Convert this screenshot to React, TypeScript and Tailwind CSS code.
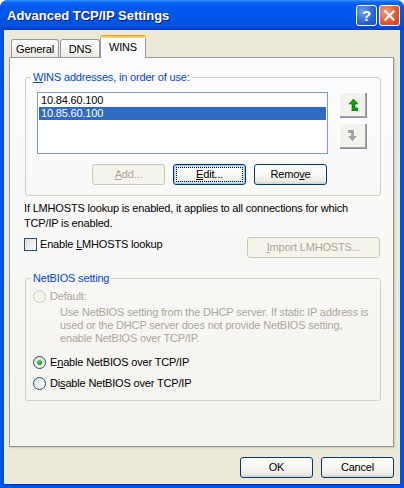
import React from "react";

const font = "font-['Liberation_Sans',Arial,sans-serif] text-[11px] leading-[13px] tracking-[-0.17px]";

function XpButton({
  children,
  disabled,
  focused,
  w = "w-[73px]",
}: {
  children: React.ReactNode;
  disabled?: boolean;
  focused?: boolean;
  w?: string;
}) {
  if (disabled) {
    return (
      <div className={`${w} h-[21px] rounded-[3px] border border-[#C9C7BA] bg-[#F5F4EA] text-[#ACA899] flex items-center justify-center`}>
        {children}
      </div>
    );
  }
  return (
    <div
      className={`${w} h-[21px] rounded-[3px] border border-[#003C74] bg-[linear-gradient(to_bottom,#FFFFFF_0%,#F4F4F0_60%,#ECEBE6_85%,#D6D0C5_100%)] flex items-center justify-center p-[1px] ${
        focused ? "shadow-[inset_0_0_0_1px_#A9C4F1,inset_0_0_0_2px_#CEE7FF]" : ""
      }`}
    >
      <div
        className={`w-full h-full flex items-center justify-center ${
          focused ? "outline-1 outline-dotted outline-black -outline-offset-2" : ""
        }`}
      >
        {children}
      </div>
    </div>
  );
}

function Radio({ checked, disabled }: { checked?: boolean; disabled?: boolean }) {
  return (
    <div
      className={`w-[13px] h-[13px] rounded-full border shrink-0 flex items-center justify-center ${
        disabled
          ? "border-[#CAC8BB] bg-[#F5F4EA]"
          : "border-[#1C5180] bg-[linear-gradient(135deg,#DCDCD7,#FFFFFF)]"
      }`}
    >
      {checked && (
        <div className="w-[5px] h-[5px] rounded-full bg-[radial-gradient(circle_at_35%_35%,#55D551,#21A121_60%,#1A7A1A)]" />
      )}
    </div>
  );
}

function Tab({ label, w }: { label: string; w: string }) {
  return (
    <div
      className={`${w} h-[18px] rounded-t-[3px] border border-b-0 border-[#919B9C] bg-[linear-gradient(to_bottom,#FFFFFF,#ECEBE6)] flex items-center justify-center pt-[1px]`}
    >
      {label}
    </div>
  );
}

function UpArrow() {
  return (
    <svg width="9" height="12" viewBox="0 0 9 12">
      <path d="M4.5 0 L9 5 L6 5 L6 9 L9 9 L9 12 L3 12 L3 5 L0 5 Z" fill="#00A800" stroke="#006A00" strokeWidth="0.6" />
    </svg>
  );
}

function DownArrow() {
  return (
    <svg width="10" height="13" viewBox="0 0 10 13">
      <path d="M1 1 L7 1 L7 7 L10 7 L5.5 12.5 L1 7 L4 7 L4 4 L1 4 Z" fill="#FFFFFF" />
      <path d="M0 0 L6 0 L6 6 L9 6 L4.5 11.5 L0 6 L3 6 L3 3 L0 3 Z" fill="#A5A5A5" />
    </svg>
  );
}

export default function App() {
  return (
    <div className={`w-[404px] h-[488px] flex flex-col bg-[#0053E8] rounded-t-[8px] overflow-hidden ${font}`}>
      {/* title bar */}
      <div className="h-[30px] shrink-0 flex items-center pl-[7px] pr-[4px] bg-[linear-gradient(to_bottom,#3D95FF_0%,#0A66F5_8%,#0058EE_25%,#0055EA_60%,#0050E0_85%,#003DC8_100%)]">
        <span className="flex-1 text-white font-bold text-[13px] tracking-normal font-['Liberation_Sans_Narrow','Liberation_Sans',sans-serif] [text-shadow:1px_1px_0_#0A1883] pt-[1px]">
          Advanced TCP/IP Settings
        </span>
        <div className="flex gap-[2px]">
          <div className="w-[21px] h-[21px] rounded-[3px] border border-white bg-[radial-gradient(circle_at_30%_30%,#6D9CF6,#2663DE_60%,#1B4FC8)] flex items-center justify-center text-white font-bold text-[15px]">
            ?
          </div>
          <div className="w-[21px] h-[21px] rounded-[3px] border border-white bg-[radial-gradient(circle_at_30%_30%,#F29B7A,#E0582A_60%,#C8401A)] flex items-center justify-center">
            <svg width="11" height="11" viewBox="0 0 11 11">
              <path d="M1.5 1.5 L9.5 9.5 M9.5 1.5 L1.5 9.5" stroke="#FFFFFF" strokeWidth="2.2" strokeLinecap="square" />
            </svg>
          </div>
        </div>
      </div>

      {/* client */}
      <div className="flex-1 mx-[4px] mb-[4px] bg-[#ECE9D8] flex flex-col pt-[5px] shadow-[0_1px_0_#0030C0]">
        {/* tabs */}
        <div className="flex items-end pl-[7px] h-[22px]">
          <Tab label="General" w="w-[48px]" />
          <div className="w-[1px]" />
          <Tab label="DNS" w="w-[40px]" />
          <div className="w-[46px] h-[23px] -mb-px relative z-10 rounded-t-[3px] border-x border-[#919B9C] bg-[#FCFCFE] flex flex-col">
            <div className="h-[3px] rounded-t-[3px] -mx-px bg-[linear-gradient(to_bottom,#E68B2C,#FFC73C,#FFE2A2)]" />
            <div className="flex-1 flex items-center justify-center pb-[2px]">WINS</div>
          </div>
        </div>

        {/* panel */}
        <div className="ml-[5px] w-[385px] h-[390px] border border-[#919B9C] bg-[linear-gradient(to_bottom,#FCFCFE,#F4F3EE)] shadow-[1px_1px_0_#D0CEBF,2px_2px_0_#E3E0D0] pl-[15px] pt-[13px] flex flex-col">
          {/* WINS addresses group */}
          <fieldset className="w-[356px] border border-[#D0D0BF] rounded-[3px] px-[11px] pb-[10px]">
            <legend className="ml-[-6px] px-[2px] text-[#0046D5]">
              <span className="underline">W</span>INS addresses, in order of use:
            </legend>
            <div className="flex mt-[8px]">
              <div className="w-[291px] h-[62px] border border-[#7F9DB9] bg-white p-[1px] flex flex-col">
                <div className="h-[13px] pl-[2px]">10.84.60.100</div>
                <div className="h-[13px] pl-[2px] bg-[#316AC5] text-white">10.85.60.100</div>
              </div>
              <div className="ml-[11px] flex flex-col gap-[6px]">
                <div className="w-[27px] h-[25px] bg-[#F3F2EC] border-t border-l border-[#FFFFFF] shadow-[inset_-1px_-1px_0_#ACA899,1px_1px_0_#8E8AA8] flex items-center justify-center">
                  <UpArrow />
                </div>
                <div className="w-[27px] h-[25px] bg-[#F3F2EC] border-t border-l border-[#FFFFFF] shadow-[inset_-1px_-1px_0_#ACA899,1px_1px_0_#8E8AA8] flex items-center justify-center">
                  <DownArrow />
                </div>
              </div>
            </div>
            <div className="w-[290px] flex justify-end gap-[8px] mt-[10px]">
              <XpButton disabled>
                <span>
                  <span className="underline">A</span>dd...
                </span>
              </XpButton>
              <XpButton focused>
                <span>
                  <span className="underline">E</span>dit...
                </span>
              </XpButton>
              <XpButton>
                <span>
                  Remo<span className="underline">v</span>e
                </span>
              </XpButton>
            </div>
          </fieldset>

          <p className="mt-[5px] -ml-px leading-[15px]">
            If LMHOSTS lookup is enabled, it applies to all connections for which
            <br />
            TCP/IP is enabled.
          </p>

          <div className="w-[356px] mt-[6px] flex items-start justify-between -ml-px">
            <div className="flex items-center gap-[3px] mt-[1px]">
              <div className="w-[13px] h-[13px] border border-[#1C5180] bg-[linear-gradient(135deg,#DCDCD7,#FFFFFF)]" />
              <span>
                Enable <span className="underline">L</span>MHOSTS lookup
              </span>
            </div>
            <XpButton disabled w="w-[133px] ml-px">
              <span>
                <span className="underline">I</span>mport LMHOSTS...
              </span>
            </XpButton>
          </div>

          {/* NetBIOS group */}
          <fieldset className="w-[356px] mt-[14px] border border-[#D0D0BF] rounded-[3px] pl-[7px] pb-[10px]">
            <legend className="ml-[-2px] px-[2px] text-[#0046D5]">NetBIOS setting</legend>
            <div className="mt-[5px] flex items-center gap-[4px] text-[#ACA899]">
              <Radio disabled />
              <span>Default:</span>
            </div>
            <p className="mt-[3px] ml-[27px] text-[#ACA899]">
              Use NetBIOS setting from the DHCP server. If static IP address is
              <br />
              used or the DHCP server does not provide NetBIOS setting,
              <br />
              enable NetBIOS over TCP/IP.
            </p>
            <div className="mt-[11px] flex items-center gap-[4px]">
              <Radio checked />
              <span>
                E<span className="underline">n</span>able NetBIOS over TCP/IP
              </span>
            </div>
            <div className="mt-[8px] flex items-center gap-[4px]">
              <Radio />
              <span>
                Di<span className="underline">s</span>able NetBIOS over TCP/IP
              </span>
            </div>
          </fieldset>
        </div>

        {/* dialog buttons */}
        <div className="mt-[10px] flex justify-end gap-[8px] pr-[6px]">
          <XpButton>OK</XpButton>
          <XpButton>Cancel</XpButton>
        </div>
      </div>
    </div>
  );
}
